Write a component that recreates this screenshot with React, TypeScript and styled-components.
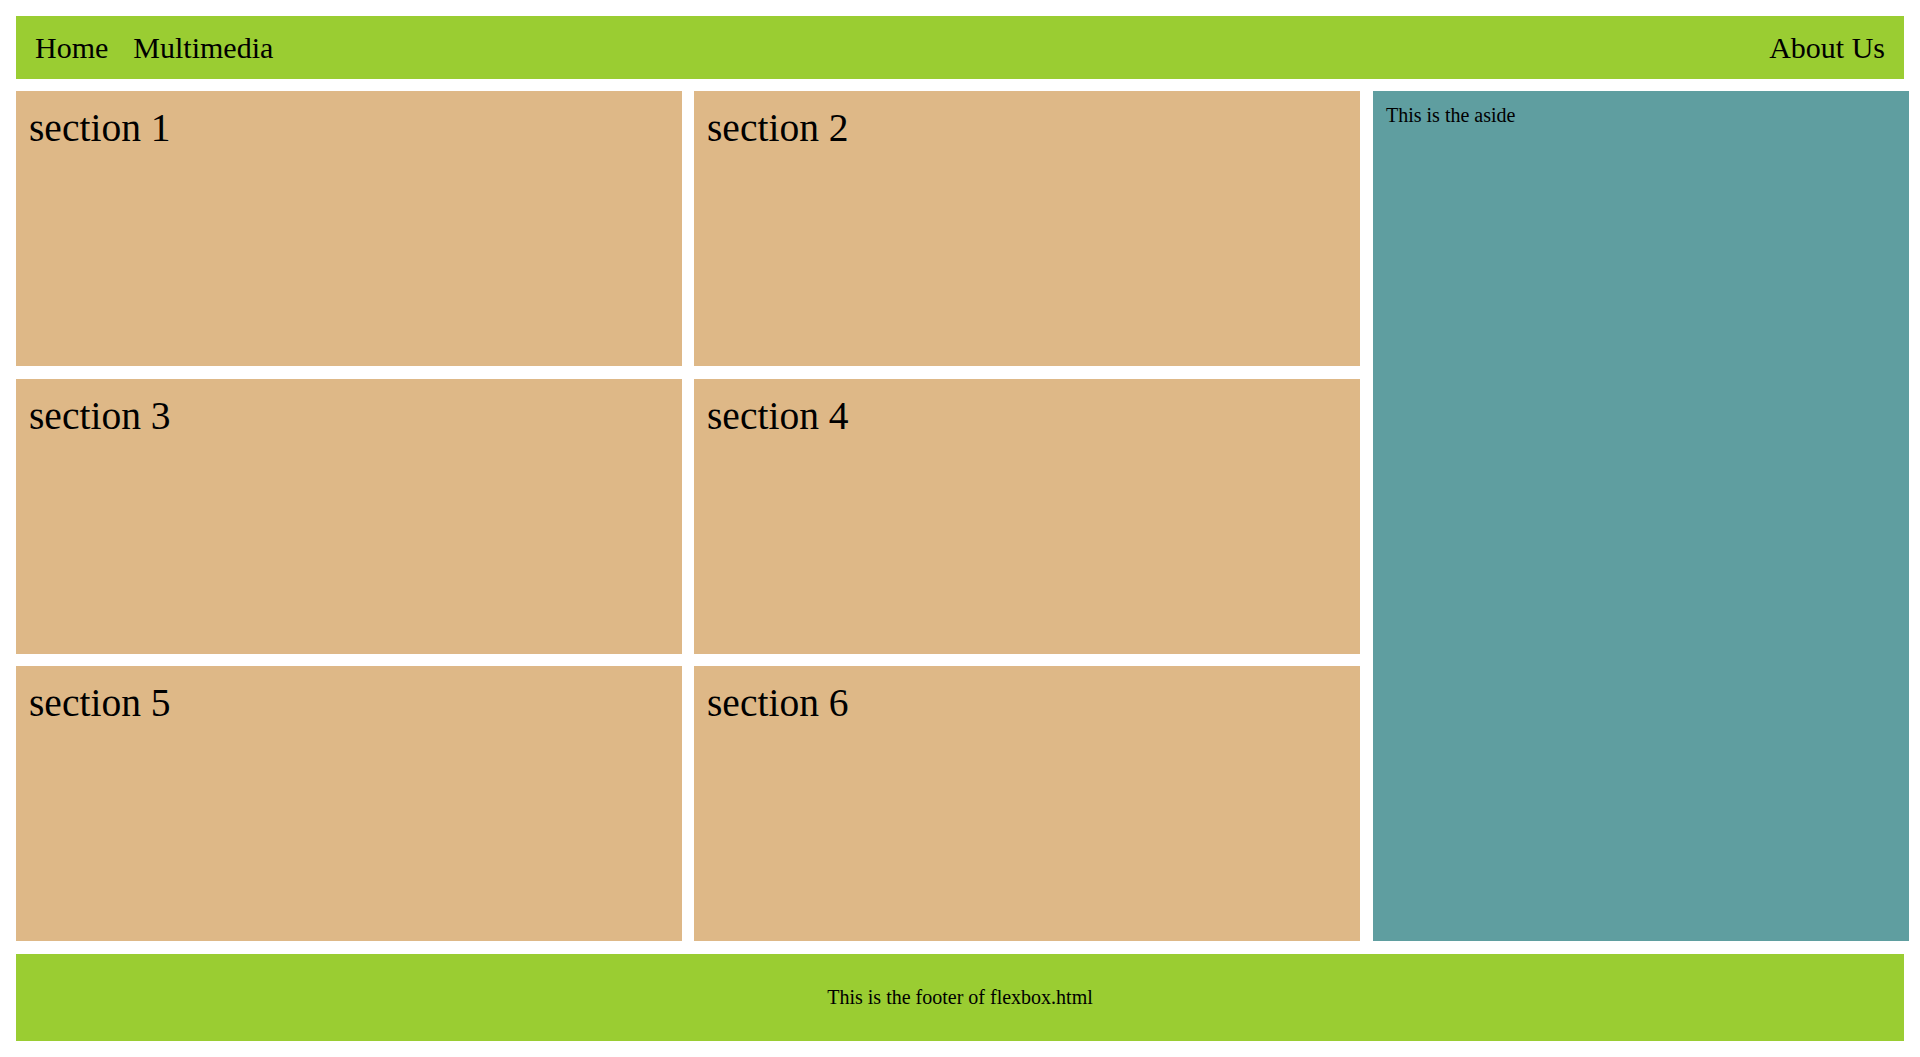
import React from "react";
import styled, { createGlobalStyle } from "styled-components";

const GlobalStyle = createGlobalStyle`
  html, body {
    margin: 0;
    padding: 0;
    background: #ffffff;
  }
  body {
    font-family: "Liberation Serif", "Times New Roman", serif;
    color: #000000;
  }
`;

const Page = styled.div`
  display: flex;
  flex-direction: column;
  padding: 16px;
  height: 1057px;
  box-sizing: border-box;
`;

const Header = styled.header`
  display: flex;
  align-items: center;
  height: 63px;
  flex: none;
  padding: 2px 19px 0 19px;
  background: #9acd32;
  box-sizing: border-box;
`;

const NavLink = styled.a<{ $push?: boolean }>`
  font-size: 30px;
  line-height: 1.15;
  color: #000000;
  text-decoration: none;
  margin-right: 25px;
  ${(p) => (p.$push ? "margin-left: auto; margin-right: 0;" : "")}
`;

const Main = styled.main`
  display: flex;
  margin-top: 12px;
  height: 850px;
  flex: none;
  width: calc(100% + 5px);
`;

const Sections = styled.div`
  display: grid;
  grid-template-columns: 666px 666px;
  grid-template-rows: 275px 275px 275px;
  column-gap: 12px;
  row-gap: 12.5px;
  flex: none;
`;

const Section = styled.section`
  background: #deb887;
  padding: 15px 13px 13px;
  box-sizing: border-box;
`;

const SectionTitle = styled.h2`
  margin: 0;
  font-size: 39.5px;
  font-weight: normal;
  line-height: 1.15;
`;

const Aside = styled.aside`
  flex: 1;
  margin-left: 13px;
  background: #5f9ea0;
  padding: 13px 13px;
  box-sizing: border-box;
  font-size: 20px;
  line-height: 1.15;
`;

const Footer = styled.footer`
  display: flex;
  align-items: center;
  justify-content: center;
  margin-top: 13px;
  height: 87px;
  flex: none;
  background: #9acd32;
  font-size: 20px;
  line-height: 1.15;
`;

const sections = [1, 2, 3, 4, 5, 6];

export default function App() {
  return (
    <>
      <GlobalStyle />
      <Page>
        <Header>
          <NavLink href="#">Home</NavLink>
          <NavLink href="#">Multimedia</NavLink>
          <NavLink href="#" $push>
            About Us
          </NavLink>
        </Header>
        <Main>
          <Sections>
            {sections.map((n) => (
              <Section key={n}>
                <SectionTitle>section {n}</SectionTitle>
              </Section>
            ))}
          </Sections>
          <Aside>This is the aside</Aside>
        </Main>
        <Footer>This is the footer of flexbox.html</Footer>
      </Page>
    </>
  );
}
